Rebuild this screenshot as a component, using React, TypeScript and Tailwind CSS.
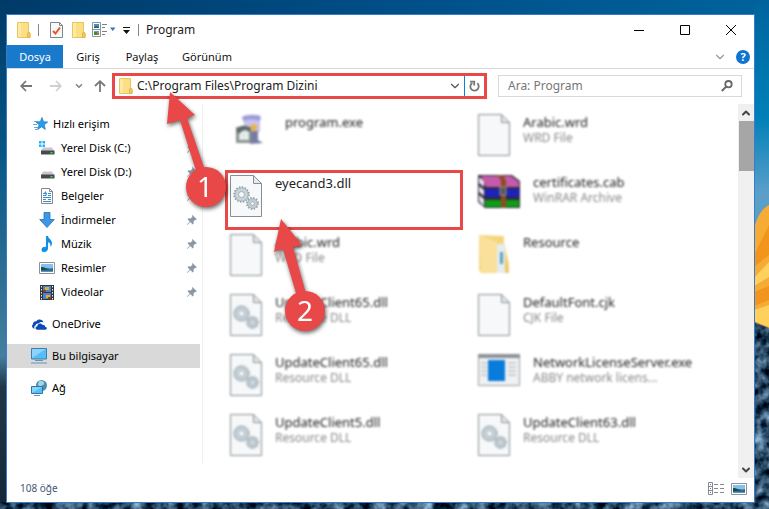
import React from 'react';
import { ChevronDown, ChevronUp } from 'lucide-react';

interface NavEntry {
  label: string;
  icon: React.ReactNode;
}

interface FileEntry {
  name: string;
  type?: string;
  icon: React.ReactNode;
  highlighted?: boolean;
  spacing?: string;
}

const FolderIcon = () => (
  <svg width="14" height="16" viewBox="0 0 14 16">
    <path d="M.5.5h11v9.5l1.500 1.500v4H.5z" fill="#fbdf85" stroke="#e9c55c" />
    <path d="M10.500 15.500v-3.500l1-2.500 1.500 2v4z" fill="#f3cd63" stroke="#dfb54b" />
    <path d="M1 1h3v14H1z" fill="#fde9a6" />
  </svg>
);

const PropertiesIcon = () => (
  <svg width="13" height="16" viewBox="0 0 13 16">
    <path d="M.5.5h9l3 3v12H.5z" fill="#f7f8f9" stroke="#7f868b" />
    <path d="M9.500.5v3h3" fill="none" stroke="#7f868b" />
    <path d="M3 9l2.500 2.500L10 5.500" fill="none" stroke="#e8532b" strokeWidth="2" />
  </svg>
);

const LayoutIcon = () => (
  <svg width="24" height="16" viewBox="0 0 24 16">
    <path d="M.5.5h8v14h-8zM.5 7.500h8" fill="#fff" stroke="#8d9499" />
    <path d="M2 2h5v4H2z" fill="#3f8ed8" />
    <path d="M2 5l2-1 3 1v1H2z" fill="#2d6441" />
    <path d="M2 9h5v4H2z" fill="#5ba4de" />
    <path d="M2 10h3v3H2z" fill="#3f8d3e" />
    <path d="M5 11h2v2H5z" fill="#d6602e" />
    <path d="M10 2.500h5M10 5.500h3M10 9.500h5M10 12.500h3" stroke="#7b8287" />
    <path d="M18 5.500h5.500l-2.750 3.500z" fill="#3e74ba" />
  </svg>
);

const ArrowIcon = ({ className }: { className: string }) => (
  <svg className={className} width="12" height="12" viewBox="0 0 12 12" fill="none" stroke="currentColor" strokeWidth="1.800">
    <path d="M12 6H1.500M6 1L1.200 6 6 11" />
  </svg>
);

const RefreshIcon = () => (
  <svg width="11" height="12" viewBox="0 0 11 12" fill="none" stroke="#777" strokeWidth="1.800">
    <path d="M3.300 2.900A4.200 4.200 0 1 0 8.300 3.300" />
    <path d="M1 1.600h4.200v4" />
  </svg>
);

const StarIcon = () => (
  <svg width="15" height="14" viewBox="0 0 15 14">
    <path d="M9 .5l1.500 4.200 4.200.3-3.400 2.800 1 4.700-3.700-2.700-4 2.700 1.500-4.700L3 5l4.300-.3z" fill="#2a9be8" stroke="#1b78c2" strokeWidth=".7" />
    <path d="M1 4.500h4M0 7.500h4M1 10.500h4M2 12.500h2" stroke="#469fdb" strokeWidth=".9" />
  </svg>
);

const DiskIcon = ({ system }: { system?: boolean }) => (
  <svg width="16" height="16" viewBox="0 0 16 16">
    {system && <path d="M0 1h2.500v2.500H0zM3.500 1H6v2.500H3.500zM0 4.500h2.500V7H0zM3.500 4.500H6V7H3.500z" fill="#20b5f2" />}
    <path d="M4 7.500h9l2 3.500H2z" fill="#c5c9cb" />
    <path d="M2 10.500h13.500v4H2z" fill="#474b4e" />
    <path d="M11.500 12h2v1.500h-2z" fill="#3be050" />
  </svg>
);

const DocumentIcon = () => (
  <svg width="14" height="16" viewBox="0 0 14 16">
    <path d="M1.500.5h8l3 3v12h-11z" fill="#fff" stroke="#84898d" />
    <path d="M9.500.5v3h3" fill="none" stroke="#84898d" />
    <path d="M3 5.500h4M3 7.500h3M8 5.500h3M8 7.500h3M3 9.500h8M3 11.500h3M8 11.500h3M3 13.500h8" stroke="#3e8cc7" />
    <path d="M4 5l2-2 1 5z" fill="#3b9ce6" />
  </svg>
);

const DownloadIcon = () => (
  <svg width="16" height="16" viewBox="0 0 16 16">
    <path d="M5 .5h6v7h4.300L8 15.500.7 7.500H5z" fill="#3f97e4" stroke="#2670b8" strokeWidth=".8" />
  </svg>
);

const MusicIcon = () => (
  <svg width="14" height="16" viewBox="0 0 14 16">
    <path d="M6 0h2c.3 2.700 4 3.500 4 7.200 0 1.600-.7 2.800-1.600 3.800.6-2.800-.4-4.300-2.400-4.800v6.300C8 14.400 6.400 16 4.300 16 2.700 16 1.500 15.100 1.500 13.700c0-1.700 1.700-3 3.500-3 .4 0 .7 0 1 .2z" fill="#1090e8" />
  </svg>
);

const PictureIcon = () => (
  <svg width="16" height="12" viewBox="0 0 16 12">
    <path d="M.5.5h15v11H.5z" fill="#fff" stroke="#8c9297" />
    <path d="M2 2h12v4H2z" fill="#85bff0" />
    <path d="M2 5c4 0 5 2 12 1v4H2z" fill="#326c86" />
    <path d="M2 5c3 0 5 2 8 2.500L2 8z" fill="#1f4a3c" />
    <path d="M2 9h12v1H2z" fill="#4f95cf" />
  </svg>
);

const VideoIcon = () => (
  <svg width="14" height="15" viewBox="0 0 14 15">
    <path d="M0 0h14v15H0z" fill="#33373a" />
    <path d="M3 1h8v6H3zM3 8h8v6H3z" fill="#4b83d4" />
    <path d="M5 2h4v3H5zM6 10h4v3H6z" fill="#e8ac2d" />
    <path d="M3 5h3v2H3zM8 12h3v2H8z" fill="#8d3f27" />
    <path d="M1.500 1v14M12.500 1v14" stroke="#e9ecee" strokeDasharray="1.500 1.500" />
  </svg>
);

const CloudIcon = () => (
  <svg width="16" height="11" viewBox="0 0 16 11">
    <path d="M3.600 9.800A2.600 2.600 0 0 1 2 5.200C1.800 3.400 3.500 1.900 5.300 2.300 6.800-.3 11.500-.3 12.500 3.400 10.500 2.400 8.500 3 7.600 4.500 5.800 4.200 4.500 5.300 4.600 6.600 3.200 7.200 2.900 8.700 3.600 9.800z" fill="#0c4bb5" />
    <path d="M6.200 10.700c-2.300-.2-2.200-3.300.1-3.500C6.500 4.500 10 3.700 11.200 5.800c1.800-.4 2.900.6 2.900 1.900 2.300.2 2.300 3 .1 3z" fill="#0c4bb5" />
  </svg>
);

const ComputerIcon = () => (
  <svg width="16" height="16" viewBox="0 0 16 16">
    <path d="M.5.5h15v10.500H.5z" fill="#55bdf8" stroke="#3c7fae" />
    <path d="M1 1h14L1 10z" fill="#8ad4fc" />
    <path d="M4 12.500h8M0 15h16" stroke="#6c92ac" />
  </svg>
);

const NetworkIcon = () => (
  <svg width="16" height="16" viewBox="0 0 16 16">
    <circle cx="10.500" cy="5.500" r="5.500" fill="#4b8eac" />
    <path d="M8 1c3-1 6 1 5 3s-3 1-3 3-3-1-3-3z" fill="#a4d5e3" />
    <path d="M.5 6.500h11v7H.5z" fill="#55bdf8" stroke="#2f76a6" />
    <path d="M1 7h10L1 13z" fill="#8ad4fc" />
    <path d="M3 15.500h6" stroke="#6c92ac" />
  </svg>
);

const PinIcon = () => (
  <svg width="10" height="10" viewBox="0 0 10 10">
    <path d="M5.500 0L10 4.500 8.800 5l-.6-.3L6.500 6.500l.2 2-1 .9-2.400-2.300L.3 9.900 0 9.600l2.700-3L.5 4.300l1-1 2 .2L5.400 1.700 5 .8z" fill="#8c99a4" />
  </svg>
);

const SearchIcon = () => (
  <svg width="12" height="12" viewBox="0 0 12 12" fill="none" stroke="#666" strokeWidth="1.800">
    <circle cx="7.500" cy="4.200" r="3.200" />
    <path d="M5.200 6.600L.8 11" strokeWidth="2" />
  </svg>
);

const PageIcon = ({ gears }: { gears?: boolean }) => (
  <svg className="shrink-0" width="32" height="42" viewBox="0 0 32 42">
    <path d="M.5.5h23l8 8v33H.5z" fill="#f6f8f9" stroke="#888e91" />
    <path d="M23.500.5v8h8z" fill="#e6eaec" stroke="#888e91" />
    {gears && (
      <g fill="none" stroke="#94a3ad">
        <circle cx="11.500" cy="19.500" r="7.300" strokeWidth="2" strokeDasharray="1.500 1.370" />
        <circle cx="11.500" cy="19.500" r="5" stroke="#c9d3d9" strokeWidth="3.500" />
        <circle cx="11.500" cy="19.500" r="6.700" strokeWidth=".7" />
        <circle cx="11.500" cy="19.500" r="3" strokeWidth=".9" />
        <circle cx="22.500" cy="28.500" r="5.500" strokeWidth="2" strokeDasharray="1.400 1.480" />
        <circle cx="22.500" cy="28.500" r="3.600" stroke="#c2cdd4" strokeWidth="2.800" />
        <circle cx="22.500" cy="28.500" r="4.900" strokeWidth=".7" />
        <circle cx="22.500" cy="28.500" r="1.900" strokeWidth=".9" />
      </g>
    )}
  </svg>
);

const InstallerIcon = () => (
  <svg className="shrink-0" width="30" height="32" viewBox="0 0 30 32">
    <path d="M8 3l17-2v17H10z" fill="#c6c4ec" />
    <path d="M7 3c4-3 16-3 19 0l-1 4c-5-2-12-2-17 0z" fill="#9f9bdc" />
    <path d="M15 17h8v9l5 3-13 1z" fill="#767ca4" />
    <path d="M1 13h15v16H1z" fill="#8a9291" />
    <path d="M4 16h10v10H4z" fill="#e2ebea" />
    <path d="M1 16c2-5 12-6 15-1l-2 3c-3-3-7-2-10 2z" fill="#5d6b69" />
    <path d="M15 12l5-2 3 4-5 4z" fill="#edb23c" />
  </svg>
);

const ArchiveIcon = () => (
  <svg className="shrink-0" width="42" height="35" viewBox="0 0 42 35">
    <path d="M0 1h34l8 6v27H7L0 28z" fill="#332b3a" />
    <path d="M1 3l5 4v6L1 9zM1 12l5 4v6l-5-4zM1 21l5 4v7l-5-5z" fill="#e4e4ee" />
    <path d="M3 2h30l8 6v5H8z" fill="#c55aab" />
    <path d="M7 15h34v8H7z" fill="#1b22bd" />
    <path d="M7 26h34v7H7z" fill="#0d9d18" />
    <path d="M20 1h5l3 6v27h-5V7z" fill="#8c4c21" />
    <path d="M22 13h6v8h-6z" fill="#56575a" stroke="#a39678" />
  </svg>
);

const BigFolderIcon = () => (
  <svg className="shrink-0" width="32" height="40" viewBox="0 0 32 40">
    <path d="M1 1l25 1v10l5 17v10H3L1 36z" fill="#f4d57d" />
    <path d="M19 10h8v29h-8z" fill="#e5edf0" />
    <path d="M22 18h3v12h-3z" fill="#5d9fc2" />
    <path d="M1 1l18 7v31L3 38z" fill="#fae09a" />
    <path d="M27 10l2 18 2 11h-4z" fill="#efc963" />
  </svg>
);

const ProgramIcon = () => (
  <svg className="shrink-0" width="42" height="32" viewBox="0 0 42 32">
    <path d="M.5.5h41v31H.5z" fill="#f0f1f2" stroke="#9a9fa3" />
    <path d="M0 0h42v4H0z" fill="#8c9196" />
    <path d="M3 9h6M3 13h6M3 17h6M3 21h6M30 9h8M30 13h8M30 17h8M30 21h8" stroke="#a6abae" />
    <path d="M10 6h17v21H10z" fill="#087bdc" />
  </svg>
);

const quickAccess: NavEntry[] = [
  { label: 'Yerel Disk (C:)', icon: <DiskIcon system /> },
  { label: 'Yerel Disk (D:)', icon: <DiskIcon /> },
  { label: 'Belgeler', icon: <DocumentIcon /> },
  { label: 'İndirmeler', icon: <DownloadIcon /> },
  { label: 'Müzik', icon: <MusicIcon /> },
  { label: 'Resimler', icon: <PictureIcon /> },
  { label: 'Videolar', icon: <VideoIcon /> }
];

const files: FileEntry[] = [
  { name: 'program.exe', icon: <InstallerIcon />, spacing: 'pl-[10px] gap-5' },
  { name: 'Arabic.wrd', type: 'WRD File', icon: <PageIcon /> },
  { name: 'eyecand3.dll', icon: <PageIcon gears />, highlighted: true, spacing: 'pl-[2px] gap-[13px]' },
  { name: 'certificates.cab', type: 'WinRAR Archive', icon: <ArchiveIcon /> },
  { name: 'Arabic.wrd', type: 'WRD File', icon: <PageIcon /> },
  { name: 'Resource', icon: <BigFolderIcon /> },
  { name: 'UpdateClient65.dll', type: 'Resource DLL', icon: <PageIcon gears /> },
  { name: 'DefaultFont.cjk', type: 'CJK File', icon: <PageIcon /> },
  { name: 'UpdateClient65.dll', type: 'Resource DLL', icon: <PageIcon gears /> },
  { name: 'NetworkLicenseServer.exe', type: 'ABBY network licens...', icon: <ProgramIcon /> },
  { name: 'UpdateClient5.dll', type: 'Resource DLL', icon: <PageIcon gears /> },
  { name: 'UpdateClient63.dll', type: 'Resource DLL', icon: <PageIcon gears /> }
];

const Wallpaper = () => (
  <svg className="absolute inset-0 h-full w-full" viewBox="0 0 769 509" preserveAspectRatio="none">
    <defs>
      <linearGradient id="sky" x1="0" x2="1">
        <stop offset="0" stopColor="#003a68" />
        <stop offset=".6" stopColor="#00528c" />
        <stop offset="1" stopColor="#00639c" />
      </linearGradient>
      <linearGradient id="haze" x1="0" y1="0" x2="0" y2="1">
        <stop offset="0" stopColor="#0084bb" stopOpacity="0" />
        <stop offset=".23" stopColor="#0080b8" />
        <stop offset=".38" stopColor="#5b9fc9" />
        <stop offset="1" stopColor="#5b9fc9" />
      </linearGradient>
      <linearGradient id="sea" x1="0" y1="0" x2="0" y2="1">
        <stop offset="0" stopColor="#003a68" />
        <stop offset=".3" stopColor="#075786" />
        <stop offset=".7" stopColor="#457f9d" />
        <stop offset=".76" stopColor="#1f3748" />
        <stop offset="1" stopColor="#122838" />
      </linearGradient>
      <filter id="rock" x="0" y="0" width="100%" height="100%" colorInterpolationFilters="sRGB">
        <feTurbulence type="fractalNoise" baseFrequency=".09" numOctaves="3" seed="4" />
        <feColorMatrix values="1.1 0 0 0 -.38  1.2 0 0 0 -.31  1.3 0 0 0 -.26  0 0 0 0 1" />
      </filter>
    </defs>
    <path d="M0 0h769v509H0z" fill="url(#sky)" />
    <path d="M0 0h8v509H0z" fill="url(#sea)" />
    <path d="M754 0h15v509h-15z" fill="url(#haze)" />
    <path d="M0 502h769v7H0z" filter="url(#rock)" />
    <path d="M754 320h15v189h-15z" filter="url(#rock)" />
    <path d="M769 205c-8 4-13 14-15 25v92l15 6z" fill="#f6ab35" />
    <path d="M769 225l-15 30v12l15-12zM754 292l15-6v14l-15 6z" fill="#f2951d" />
    <path d="M769 262l-15 16v8l15-9zM754 310l15-5v22l-15-6z" fill="#ffd05c" />
  </svg>
);

const TitleBar = () => (
  <header className="flex h-[30px] items-center justify-between">
    <div className="flex items-center pl-[10px]">
      <FolderIcon />
      <span className="ml-[7px] h-3 w-px bg-[#888]" />
      <button type="button" aria-label="Özellikler" className="ml-[11px]"><PropertiesIcon /></button>
      <button type="button" aria-label="Yeni klasör" className="ml-[9px]"><FolderIcon /></button>
      <button type="button" aria-label="Düzen" className="ml-[6px]"><LayoutIcon /></button>
      <button type="button" aria-label="Özelleştir" className="ml-[7px]">
        <svg width="7" height="7" viewBox="0 0 7 7">
          <path d="M0 .5h7" stroke="#111" />
          <path d="M0 3h7L3.500 7z" fill="#111" />
        </svg>
      </button>
      <span className="ml-2 h-3 w-px bg-[#888]" />
      <h1 className="ml-[7px] text-xs text-[#222]">Program</h1>
    </div>
    <div className="flex">
      <button type="button" aria-label="Simge durumuna küçült" className="flex w-[46px] justify-center">
        <svg width="10" height="10" viewBox="0 0 10 10"><path d="M0 5.500h10" stroke="#000" /></svg>
      </button>
      <button type="button" aria-label="Ekranı kapla" className="flex w-[46px] justify-center">
        <svg width="10" height="10" viewBox="0 0 10 10"><path d="M.5.5h9v9h-9z" fill="none" stroke="#000" /></svg>
      </button>
      <button type="button" aria-label="Kapat" className="flex w-[46px] justify-center">
        <svg width="10" height="10" viewBox="0 0 10 10"><path d="M0 0l10 10M10 0L0 10" stroke="#000" /></svg>
      </button>
    </div>
  </header>
);

const RibbonTabs = () => (
  <nav className="flex h-6 items-stretch border-b border-[#d9dadb] text-[11px] leading-4 text-[#111]">
    <button type="button" className="w-14 bg-[#1979ca] text-white">Dosya</button>
    <button type="button" className="w-[50px]">Giriş</button>
    <button type="button" className="w-[58px]">Paylaş</button>
    <button type="button" className="w-[72px]">Görünüm</button>
    <div className="ml-auto flex items-center gap-[9px] pr-1">
      <button type="button" aria-label="Şeridi genişlet"><ChevronDown size={14} color="#999" /></button>
      <button type="button" aria-label="Yardım" className="flex h-[14px] w-[14px] items-center justify-center rounded-full bg-[#0f73d1] text-[11px] font-bold text-white">?</button>
    </div>
  </nav>
);

const AddressRow = () => (
  <div className="flex h-[35px] items-center pb-[2px]">
    <div className="flex w-[105px] shrink-0 items-center pl-[13px]">
      <button type="button" aria-label="Geri"><ArrowIcon className="text-[#777]" /></button>
      <button type="button" aria-label="İleri" className="ml-[18px]"><ArrowIcon className="rotate-180 text-[#d0d0d0]" /></button>
      <button type="button" aria-label="Son konumlar" className="ml-[12px]"><ChevronDown size={10} color="#888" strokeWidth={4} /></button>
      <button type="button" aria-label="Yukarı" className="ml-[10px]"><ArrowIcon className="rotate-90 text-[#777]" /></button>
    </div>
    <div className="flex h-[26px] min-w-0 flex-1 items-center border-3 border-[#e94848] pl-1">
      <FolderIcon />
      <input aria-label="Adres" defaultValue="C:\Program Files\Program Dizini" className="ml-1 min-w-0 flex-1 text-xs text-[#222] outline-none" />
      <button type="button" aria-label="Önceki konumlar" className="px-[2px]"><ChevronDown size={14} color="#555" /></button>
      <button type="button" aria-label="Yenile" className="flex h-5 w-5 items-center justify-center border-l border-[#0f80d8]"><RefreshIcon /></button>
    </div>
    <div className="mr-3 ml-[11px] flex h-[22px] w-[244px] items-center border border-[#d9d9d9] pr-2 pl-[9px]">
      <input aria-label="Ara" type="search" placeholder="Ara: Program" className="min-w-0 flex-1 text-xs outline-none placeholder:text-[#777]" />
      <button type="button" aria-label="Aramayı başlat"><SearchIcon /></button>
    </div>
  </div>
);

const NavPane = () => (
  <aside className="mb-[15px] w-[196px] shrink-0 border-r border-[#f0f0f0] text-[11px] text-black">
    <a href="#quick" className="mt-2 flex h-6 items-center gap-[5px] pl-[26px]">
      <StarIcon />
      Hızlı erişim
    </a>
    <ul>
      {quickAccess.map((entry) => (
        <li key={entry.label}>
          <a href="#folder" className="flex h-6 items-center gap-[6px] pr-[5px] pl-8">
            <span className="flex w-4 justify-center">{entry.icon}</span>
            <span className="flex-1">{entry.label}</span>
            <PinIcon />
          </a>
        </li>
      ))}
    </ul>
    <div className="mt-2 flex flex-col gap-2">
      <a href="#onedrive" className="flex h-6 items-center gap-[5px] pl-6"><CloudIcon />OneDrive</a>
      <a href="#computer" className="mr-[2px] flex h-6 items-center gap-[5px] bg-[#d9d9d9] pl-6"><ComputerIcon />Bu bilgisayar</a>
      <a href="#network" className="flex h-6 items-center gap-[5px] pl-6"><NetworkIcon />Ağ</a>
    </div>
  </aside>
);

const FileTile = ({ file }: { file: FileEntry }) => (
  <li
    className={`flex h-[60px] items-start ${file.spacing ?? 'pl-[5px] gap-[13px]'} ${
      file.highlighted ? 'mr-[10px] border-3 border-[#e94848] pt-[2px]' : 'pt-1 blur-[1px]'
    }`}
  >
    {file.icon}
    <div className="whitespace-nowrap">
      <p className="text-[13px] leading-4 text-[#222]">{file.name}</p>
      {file.type && <p className="text-xs text-[#888]">{file.type}</p>}
    </div>
  </li>
);

const ScrollBar = () => (
  <div className="flex w-4 shrink-0 flex-col items-center bg-[#f0f0f0]">
    <button type="button" aria-label="Yukarı kaydır" className="flex h-[17px] items-center"><ChevronUp size={12} color="#444" strokeWidth={4} /></button>
    <div className="h-[50px] w-[15px] bg-[#a6a6a6]" />
    <button type="button" aria-label="Aşağı kaydır" className="mt-auto flex h-[17px] items-center"><ChevronDown size={12} color="#444" strokeWidth={4} /></button>
  </div>
);

const StatusBar = () => (
  <footer className="flex h-6 items-center justify-between pr-[7px] pb-[3px] pl-[13px] text-[10px] text-[#3f5878]">
    <span>108 öğe</span>
    <div className="flex items-center gap-[7px]">
      <button type="button" aria-label="Ayrıntılar">
        <svg width="16" height="13" viewBox="0 0 16 13" fill="none" stroke="#858a8e">
          <path d="M.5.5h4v12h-4zM.5 4.500h4M.5 8.500h4" />
          <path d="M6 2.500h4M12 2.500h4M6 6.500h4M12 6.500h4M6 10.500h4M12 10.500h4" />
          <path d="M2 2.500h1M2 6.500h1" stroke="#3c87cf" />
          <path d="M2 10.500h1" stroke="#c4432b" />
        </svg>
      </button>
      <button type="button" aria-label="Büyük simgeler"><PictureIcon /></button>
    </div>
  </footer>
);

// Numbered step arrows that lie over the window
const Callouts = () => (
  <svg
    className="pointer-events-none absolute top-0 left-0 drop-shadow-[1px_2px_2px_rgba(0,0,0,0.6)]"
    width="340"
    height="340"
    viewBox="0 0 340 340"
    fill="#e94848"
  >
    <path d="M170 92l25 23-8 3 19 55-8 4-18-57-13 4z" />
    <circle cx="206" cy="187" r="20" />
    <path d="M281 219l21 26-9 2 14 50-9 3-15-51-9 3z" />
    <circle cx="305" cy="311" r="20" />
    <g fill="#fff" fontSize="28" textAnchor="middle">
      <text x="205" y="197">1</text>
      <text x="305" y="321">2</text>
    </g>
  </svg>
);

const App: React.FC = () => {
  return (
    <div className="relative flex min-h-screen pt-[14px] pr-[14px] pb-[6px] pl-[6px] font-['Noto_Sans','Open_Sans',sans-serif]">
      <Wallpaper />
      <main className="relative flex min-w-0 flex-1 flex-col border border-[#3b7bcb] bg-white">
        <TitleBar />
        <RibbonTabs />
        <AddressRow />
        <div className="flex flex-1">
          <NavPane />
          <ul className="grid min-w-0 flex-1 auto-rows-[60px] grid-cols-2 pt-[6px] pr-[17px] pl-[22px]">
            {files.map((file, index) => (
              <FileTile key={index} file={file} />
            ))}
          </ul>
          <ScrollBar />
        </div>
        <StatusBar />
      </main>
      <Callouts />
    </div>
  );
};

export default App;
